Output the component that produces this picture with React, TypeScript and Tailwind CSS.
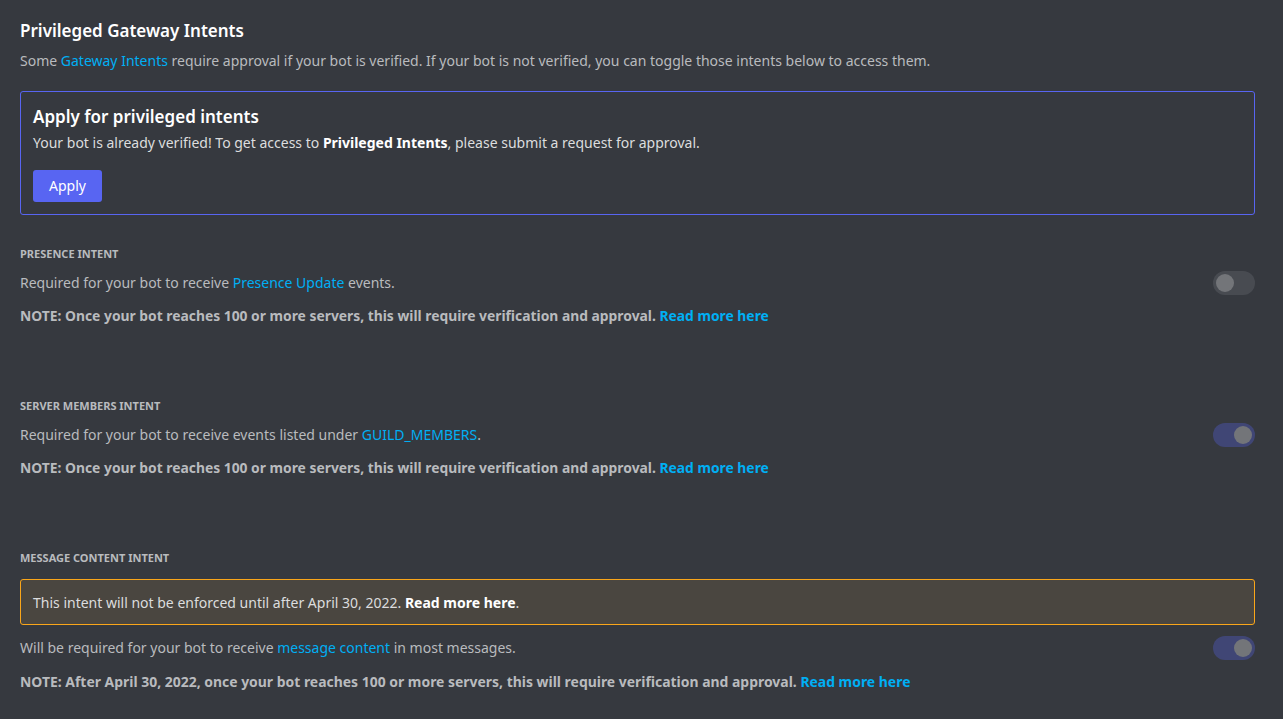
import React from "react";

function Toggle({ on }: { on: boolean }) {
  return (
    <div className="opacity-30">
      <div
        className={`relative w-[42px] h-[24px] rounded-full ${on ? "bg-[#5865f2]" : "bg-[#72767d]"}`}
      >
        <div
          className={`absolute top-[3px] w-[18px] h-[18px] rounded-full bg-white ${on ? "left-[21px]" : "left-[3px]"}`}
        />
      </div>
    </div>
  );
}

function Link({ children }: { children: React.ReactNode }) {
  return <span className="text-[#00aff4]">{children}</span>;
}

function Section({
  label,
  desc,
  note,
  on,
  warning,
  noteGap,
  noteSize,
}: {
  label: string;
  desc: React.ReactNode;
  note: React.ReactNode;
  on: boolean;
  warning?: React.ReactNode;
  noteGap?: string;
  noteSize?: string;
}) {
  return (
    <div className="flex flex-col">
      <div className="text-[11px] leading-[16px] font-bold uppercase text-[#b9bbbe]">{label}</div>
      {warning}
      <div className={`flex items-center justify-between ${warning ? "mt-[11px]" : "mt-[9px]"}`}>
        <div className="text-[14px] leading-[20px] text-[#b9bbbe]">{desc}</div>
        <Toggle on={on} />
      </div>
      <div className={`${noteGap ?? "mt-[11px]"} ${noteSize ?? "text-[13.85px]"} leading-[20px] font-bold text-[#b9bbbe]`}>
        {note}
      </div>
    </div>
  );
}

export default function App() {
  return (
    <div
      className="w-[1283px] h-[719px] bg-[#36393f] px-[20px] pt-[19px] overflow-hidden"
      style={{ fontFamily: '"Noto Sans", "Open Sans", sans-serif' }}
    >
      <div className="flex flex-col" style={{ width: 1235 }}>
        <h1 className="text-[17px] leading-[24px] font-semibold text-white">Privileged Gateway Intents</h1>
        <p className="mt-[8px] text-[14px] leading-[20px] text-[#b9bbbe]">
          Some <Link>Gateway Intents</Link> require approval if your bot is verified. If your bot is not
          verified, you can toggle those intents below to access them.
        </p>
        <div className="mt-[20px] h-[124px] border border-[#5865f2] rounded-[3px] px-[12px] pt-[13px] flex flex-col">
          <div className="text-[17px] leading-[24px] font-semibold text-white">Apply for privileged intents</div>
          <div className="mt-[4px] text-[14px] leading-[20px] text-[#dcddde]">
            Your bot is already verified! To get access to{" "}
            <span className="font-bold text-white">Privileged Intents</span>, please submit a request for approval.
          </div>
          <div className="mt-[17px]">
            <button className="h-[32px] px-[16px] rounded-[3px] bg-[#5865f2] text-white text-[14px] leading-[16px]">
              Apply
            </button>
          </div>
        </div>

        <div className="mt-[31px]">
          <Section
            label="Presence Intent"
            desc={
              <>
                Required for your bot to receive <Link>Presence Update</Link> events.
              </>
            }
            note={
              <>
                NOTE: Once your bot reaches 100 or more servers, this will require verification and approval.{" "}
                <Link>Read more here</Link>
              </>
            }
            on={false}
          />
        </div>
        <div className="mt-[72px]">
          <Section
            label="Server Members Intent"
            desc={
              <>
                Required for your bot to receive events listed under <Link>GUILD_MEMBERS</Link>.
              </>
            }
            note={
              <>
                NOTE: Once your bot reaches 100 or more servers, this will require verification and approval.{" "}
                <Link>Read more here</Link>
              </>
            }
            on={true}
          />
        </div>
        <div className="mt-[72px]">
          <Section
            label="Message Content Intent"
            noteGap="mt-[12px]"
            noteSize="text-[13.95px]"
            warning={
              <div className="mt-[13px] h-[46px] border border-[#faa61a] bg-[#4a4640] rounded-[3px] px-[12px] flex items-center text-[14px] text-[#dcddde]">
                <span>
                  This intent will not be enforced until after April 30, 2022.{" "}
                  <span className="font-bold text-white">Read more here</span>.
                </span>
              </div>
            }
            desc={
              <>
                Will be required for your bot to receive <Link>message content</Link> in most messages.
              </>
            }
            note={
              <>
                NOTE: After April 30, 2022, once your bot reaches 100 or more servers, this will require verification
                and approval. <Link>Read more here</Link>
              </>
            }
            on={true}
          />
        </div>
      </div>
    </div>
  );
}
